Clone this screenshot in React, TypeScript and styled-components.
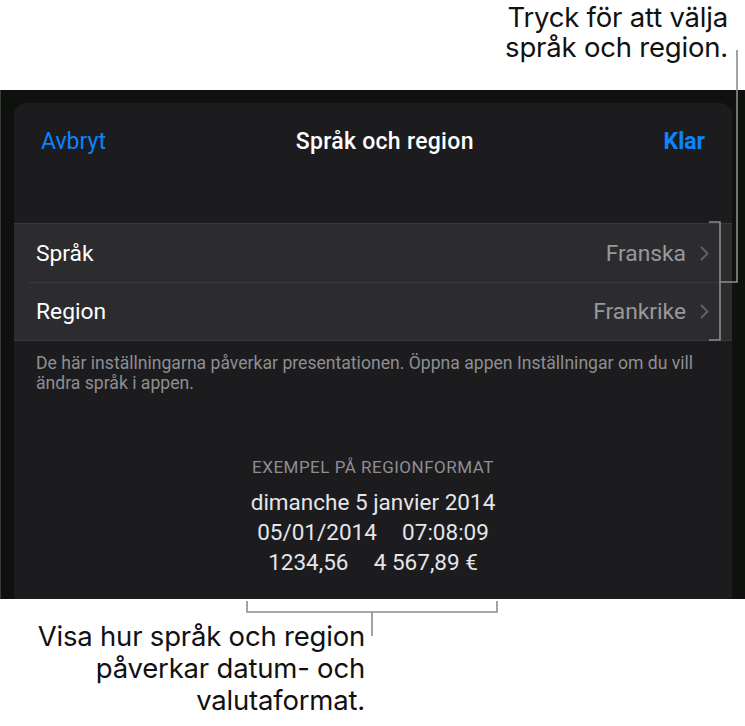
import React from "react"
import styled, { createGlobalStyle } from "styled-components"

const GlobalStyle = createGlobalStyle`
  html, body {
    margin: 0;
    padding: 0;
    background: #ffffff;
  }
  body {
    font-family: "Roboto", "Liberation Sans", sans-serif;
    -webkit-font-smoothing: antialiased;
  }
`

const rows = [
  { label: "Språk", value: "Franska" },
  { label: "Region", value: "Frankrike" },
]

const samples = ["dimanche 5 janvier 2014", "05/01/2014\u2003\u200A07:08:09", "1234,56\u2003\u200A4 567,89 €"]

export default function App() {
  return (
    <Page>
      <GlobalStyle />
      <TopCallout>
        Tryck för att välja
        <br />
        språk och region.
      </TopCallout>

      <Screen>
        <Sheet>
          <Header>
            <NavButton>Avbryt</NavButton>
            <Title>Språk och region</Title>
            <NavButton $bold>Klar</NavButton>
          </Header>

          <Group>
            {rows.map((row, i) => (
              <Row key={row.label} $first={i === 0}>
                <RowLabel>{row.label}</RowLabel>
                <RowValue>
                  {row.value}
                  <Chevron viewBox="0 0 9 15">
                    <polyline points="1.5,1.5 7.5,7.5 1.5,13.5" />
                  </Chevron>
                </RowValue>
              </Row>
            ))}
          </Group>

          <Footnote>
            De här inställningarna påverkar presentationen. Öppna appen Inställningar om du vill ändra språk i appen.
          </Footnote>

          <Example>
            <ExampleTitle>Exempel på regionformat</ExampleTitle>
            {samples.map(s => (
              <ExampleLine key={s}>{s}</ExampleLine>
            ))}
          </Example>
        </Sheet>
      </Screen>

      <BottomCallout>
        Visa hur språk och region
        <br />
        påverkar datum- och
        <br />
        valutaformat.
      </BottomCallout>

      <Leaders viewBox="0 0 745 726">
        {/* top callout */}
        <path d="M737 50 V282 H720" />
        <path d="M709 222 H720 V340 H709" />
        {/* bottom callout */}
        <path d="M247 601 V612 H497 V601" />
        <path d="M372 612 V636" />
      </Leaders>
    </Page>
  )
}

// --- styled components ---

const Page = styled.div`
  position: relative;
  width: 745px;
  height: 726px;
  overflow: hidden;
  display: flex;
  flex-direction: column;
`

const CalloutText = styled.div`
  font-family: "Inter", "Liberation Sans", sans-serif;
  font-size: 27.5px;
  color: #111111;
  letter-spacing: -0.2px;
`

const TopCallout = styled(CalloutText)`
  height: 90px;
  box-sizing: border-box;
  padding: 2px 17px 0 0;
  line-height: 30px;
  text-align: right;
`

const Screen = styled.div`
  height: 509px;
  box-sizing: border-box;
  padding: 13px 13px 0 13px;
  background: #0e110e;
  border-left: 1px solid #3a3a3a;
  display: flex;
`

const Sheet = styled.div`
  flex: 1;
  background: #1c1c1e;
  border-radius: 12px 12px 0 0;
  overflow: hidden;
`

const Header = styled.div`
  height: 76px;
  padding: 0 27px;
  display: flex;
  align-items: center;
  justify-content: space-between;
  margin-bottom: 44px;
`

const NavButton = styled.span<{ $bold?: boolean }>`
  font-size: 23px;
  color: #0a84ff;
  font-weight: ${p => (p.$bold ? 700 : 400)};
`

const Title = styled.span`
  font-size: 23px;
  font-weight: 500;
  letter-spacing: 0.3px;
  color: #ffffff;
`

const Group = styled.div`
  background: #2c2c2e;
  border-top: 1px solid #38383a;
  border-bottom: 1px solid #38383a;
`

const Row = styled.div<{ $first?: boolean }>`
  height: 58px;
  display: flex;
  align-items: center;
  justify-content: space-between;
  padding: 0 23px 0 22px;
  position: relative;
  ${p =>
    !p.$first &&
    `
    &::before {
      content: "";
      position: absolute;
      top: 0;
      left: 15px;
      right: 0;
      border-top: 1px solid #3a3a3c;
    }
  `}
`

const RowLabel = styled.span`
  font-size: 22.8px;
  color: #ffffff;
`

const RowValue = styled.span`
  display: flex;
  align-items: center;
  gap: 14px;
  font-size: 22.8px;
  color: #98989d;
`

const Chevron = styled.svg`
  width: 9px;
  height: 15px;
  fill: none;
  stroke: #636366;
  stroke-width: 1.8;
  stroke-linecap: round;
  stroke-linejoin: round;
`

const Footnote = styled.p`
  margin: 12px 0 0;
  padding: 0 16px 0 22px;
  font-size: 17.6px;
  line-height: 20px;
  color: #8e8e93;
`

const Example = styled.div`
  margin-top: 64px;
  display: flex;
  flex-direction: column;
  align-items: center;
`

const ExampleTitle = styled.div`
  font-size: 17px;
  line-height: 20px;
  letter-spacing: 0.5px;
  color: #8e8e93;
  text-transform: uppercase;
  margin-bottom: 10px;
`

const ExampleLine = styled.div`
  font-size: 22.5px;
  line-height: 30px;
  color: #e5e5ea;
  white-space: pre;
`

const BottomCallout = styled(CalloutText)`
  width: 365px;
  margin-top: 21px;
  line-height: 32px;
  text-align: right;
`

const Leaders = styled.svg`
  position: absolute;
  inset: 0;
  width: 745px;
  height: 726px;
  pointer-events: none;
  fill: none;
  stroke: #8c8c8c;
  stroke-width: 1.6;
`
